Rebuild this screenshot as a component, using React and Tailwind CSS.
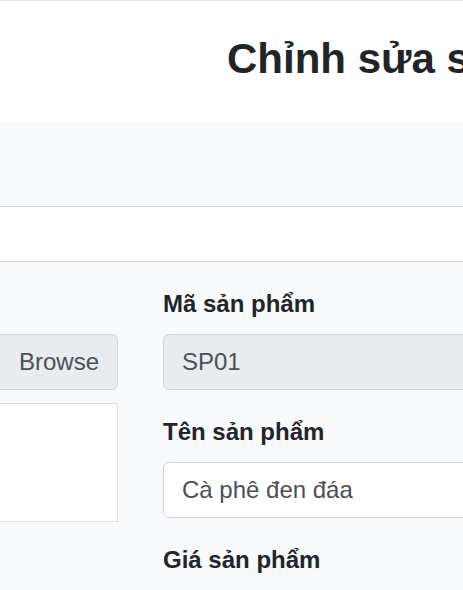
import React from 'react'

function Field({ label, value, disabled }) {
  return (
    <div className="mb-[24px]">
      <label className="block mb-[12px] text-[24px] leading-[36px] font-bold text-[#212529] whitespace-nowrap">{label}</label>
      {value !== undefined && (
        <div className={`h-[56px] flex items-center pl-[18px] border border-[#ced4da] rounded-[6px] text-[24px] leading-[36px] text-[#495057] whitespace-nowrap ${disabled ? 'bg-[#e9ecef]' : 'bg-white'}`}>
          {value}
        </div>
      )}
    </div>
  )
}

export default function App() {
  return (
    <div className="w-[463px] h-[590px] overflow-hidden bg-[#f8f9fa] font-['Liberation_Sans',Arial,sans-serif]">
      <div className="h-[122px] bg-white border-t border-[#dee2e6] pt-[33px] pl-[227px] whitespace-nowrap">
        <h1 className="text-[42px] leading-[50px] font-bold text-[#212529]">Chỉnh sửa sản phẩm</h1>
      </div>
      <div className="h-[85px] bg-[#f8f9fa] border-b border-[#ced4da]" />
      <div className="h-[55px] bg-white border-b border-[#ced4da]" />

      <div className="flex gap-[45px] pt-[24px]">
        <div className="w-[118px] shrink-0 pt-[48px]">
          <div className="h-[56px] flex items-center justify-end pr-[18px] bg-[#e9ecef] border border-l-0 border-[#ced4da] rounded-r-[6px] text-[24px] leading-[36px] text-[#495057]">
            Browse
          </div>
          <div className="mt-[13px] h-[119px] bg-white border border-l-0 border-[#dee2e6]" />
        </div>
        <div className="w-[420px] shrink-0">
          <Field label="Mã sản phẩm" value="SP01" disabled />
          <Field label="Tên sản phẩm" value="Cà phê đen đáa" />
          <Field label="Giá sản phẩm" value="25000" />
        </div>
      </div>
    </div>
  )
}
